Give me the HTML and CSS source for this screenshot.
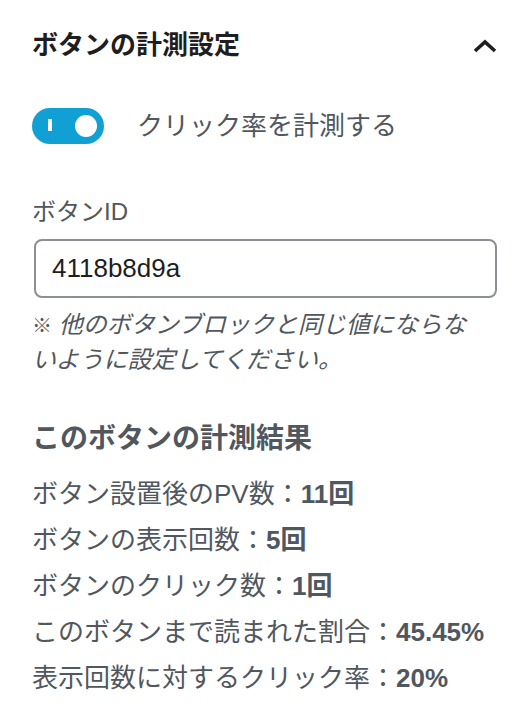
FILE: index.html
```html
<!DOCTYPE html>
<html lang="ja">
<head>
<meta charset="utf-8">
<title>ボタンの計測設定</title>
<link rel="stylesheet" href="styles.css">
</head>
<body>
<div class="panel">
  <div class="panel-header">
    <h2 class="panel-title">ボタンの計測設定</h2>
    <svg class="chevron" width="24" height="14" viewBox="0 0 24 14" aria-hidden="true">
      <path d="M2 12 L12 3 L22 12" fill="none" stroke="#1e1e1e" stroke-width="3.6"/>
    </svg>
  </div>

  <div class="toggle-row">
    <span class="toggle">
      <span class="toggle-mark"></span>
      <span class="toggle-knob"></span>
    </span>
    <span class="toggle-label">クリック率を計測する</span>
  </div>

  <label class="field-label">ボタンID</label>
  <div class="field-input">4118b8d9a</div>
  <p class="help"><span class="note-mark">※</span> 他のボタンブロックと同じ値にならないように設定してください。</p>

  <h3 class="results-title">このボタンの計測結果</h3>
  <ul class="results">
    <li>ボタン設置後のPV数：<b>11回</b></li>
    <li>ボタンの表示回数：<b>5回</b></li>
    <li>ボタンのクリック数：<b>1回</b></li>
    <li>このボタンまで読まれた割合：<b>45.45%</b></li>
    <li>表示回数に対するクリック率：<b>20%</b></li>
  </ul>
</div>
</body>
</html>
```

FILE: styles.css
```css
* { box-sizing: border-box; }
html, body {
  margin: 0;
  padding: 0;
  background: #ffffff;
}
body {
  font-family: "Liberation Sans", "Noto Sans CJK JP", sans-serif;
  color: #50575e;
}
.panel {
  padding: 27px 31px 0 32px;
}
.panel-header {
  display: flex;
  align-items: center;
  justify-content: space-between;
  height: 36px;
}
.panel-title {
  margin: 0;
  font-size: 26px;
  line-height: 36px;
  font-weight: 700;
  color: #1e1e1e;
}
.chevron {
  display: block;
  margin-top: 2px;
}
.toggle-row {
  display: flex;
  align-items: center;
  gap: 33px;
  margin-top: 45px;
  height: 36px;
}
.toggle {
  position: relative;
  display: block;
  width: 72px;
  height: 36px;
  border-radius: 18px;
  background: #11a0d3;
  flex: none;
}
.toggle-mark {
  position: absolute;
  left: 16px;
  top: 11px;
  width: 4px;
  height: 12px;
  background: #ffffff;
}
.toggle-knob {
  position: absolute;
  left: 43px;
  top: 7px;
  width: 22px;
  height: 22px;
  border-radius: 50%;
  background: #ffffff;
}
.toggle-label {
  font-size: 26px;
  line-height: 36px;
  color: #50575e;
}
.field-label {
  display: block;
  margin-top: 51px;
  font-size: 24px;
  line-height: 34px;
  color: #50575e;
}
.field-input {
  margin-top: 10px;
  margin-left: 2px;
  height: 59px;
  border: 2px solid #8c8f94;
  border-radius: 8px;
  padding: 0 16px;
  font-size: 26px;
  line-height: 55px;
  color: #1e1e1e;
}
.help {
  margin: 10px 0 0 0;
  max-width: 450px;
  font-size: 24px;
  line-height: 34px;
  font-style: italic;
  color: #50575e;
}
.note-mark {
  font-style: normal;
  font-weight: 700;
  font-size: 20px;
}
.results-title {
  margin: 42px 0 0 0;
  font-size: 28px;
  line-height: 40px;
  font-weight: 700;
  color: #50575e;
}
.results {
  list-style: none;
  margin: 12px 0 0 0;
  padding: 0;
}
.results li {
  font-size: 26px;
  line-height: 46px;
  color: #50575e;
}
.results b {
  font-weight: 700;
}
```
